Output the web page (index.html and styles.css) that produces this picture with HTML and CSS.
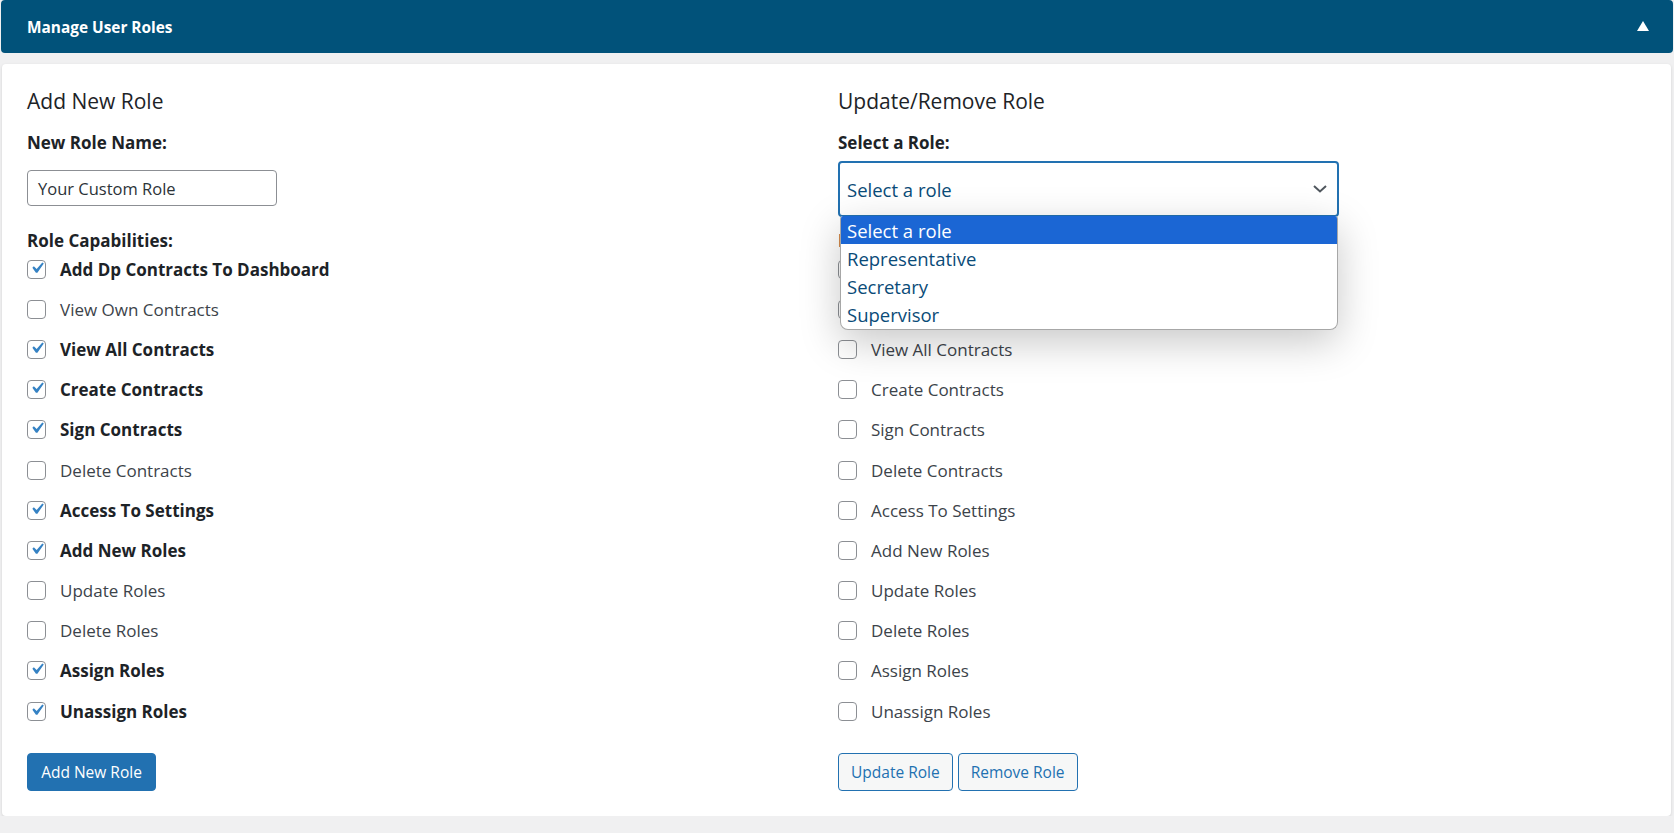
FILE: index.html
```html
<!DOCTYPE html>
<html lang="en">
<head>
<meta charset="utf-8">
<title>Manage User Roles</title>
<link rel="stylesheet" href="styles.css">
</head>
<body>
<div class="page">
  <header class="bar">
    <h1 class="bar-title">Manage User Roles</h1>
    <svg class="bar-toggle" width="12" height="10" viewBox="0 0 12 10" aria-hidden="true"><polygon points="6,0 12,10 0,10" fill="#fff"/></svg>
  </header>

  <main class="card">
    <section class="col">
      <h2 class="col-title">Add New Role</h2>
      <div class="field-label">New Role Name:</div>
      <div class="text-input">Your Custom Role</div>
      <div class="field-label caps-label">Role Capabilities:</div>
      <ul class="caps">
        <li class="cap on"><span class="box"><svg viewBox="0 0 20 20"><path d="M14.83 4.89l1.34.94-5.81 8.38H9.02L5.78 9.67l1.34-1.25 2.57 2.4z"/></svg></span>Add Dp Contracts To Dashboard</li>
        <li class="cap"><span class="box"></span>View Own Contracts</li>
        <li class="cap on"><span class="box"><svg viewBox="0 0 20 20"><path d="M14.83 4.89l1.34.94-5.81 8.38H9.02L5.78 9.67l1.34-1.25 2.57 2.4z"/></svg></span>View All Contracts</li>
        <li class="cap on"><span class="box"><svg viewBox="0 0 20 20"><path d="M14.83 4.89l1.34.94-5.81 8.38H9.02L5.78 9.67l1.34-1.25 2.57 2.4z"/></svg></span>Create Contracts</li>
        <li class="cap on"><span class="box"><svg viewBox="0 0 20 20"><path d="M14.83 4.89l1.34.94-5.81 8.38H9.02L5.78 9.67l1.34-1.25 2.57 2.4z"/></svg></span>Sign Contracts</li>
        <li class="cap"><span class="box"></span>Delete Contracts</li>
        <li class="cap on"><span class="box"><svg viewBox="0 0 20 20"><path d="M14.83 4.89l1.34.94-5.81 8.38H9.02L5.78 9.67l1.34-1.25 2.57 2.4z"/></svg></span>Access To Settings</li>
        <li class="cap on"><span class="box"><svg viewBox="0 0 20 20"><path d="M14.83 4.89l1.34.94-5.81 8.38H9.02L5.78 9.67l1.34-1.25 2.57 2.4z"/></svg></span>Add New Roles</li>
        <li class="cap"><span class="box"></span>Update Roles</li>
        <li class="cap"><span class="box"></span>Delete Roles</li>
        <li class="cap on"><span class="box"><svg viewBox="0 0 20 20"><path d="M14.83 4.89l1.34.94-5.81 8.38H9.02L5.78 9.67l1.34-1.25 2.57 2.4z"/></svg></span>Assign Roles</li>
        <li class="cap on"><span class="box"><svg viewBox="0 0 20 20"><path d="M14.83 4.89l1.34.94-5.81 8.38H9.02L5.78 9.67l1.34-1.25 2.57 2.4z"/></svg></span>Unassign Roles</li>
      </ul>
      <div class="actions">
        <button class="btn btn-primary">Add New Role</button>
      </div>
    </section>

    <section class="col">
      <h2 class="col-title">Update/Remove Role</h2>
      <div class="field-label">Select a Role:</div>
      <div class="select-wrap">
        <div class="select">
          <span>Select a role</span>
          <svg class="chev" width="14" height="8" viewBox="0 0 14 8" aria-hidden="true"><path d="M1 1l6 5.5L13 1" fill="none" stroke="#50575e" stroke-width="2"/></svg>
        </div>
        <ul class="select-list">
          <li class="opt active">Select a role</li>
          <li class="opt">Representative</li>
          <li class="opt">Secretary</li>
          <li class="opt">Supervisor</li>
        </ul>
      </div>
      <div class="field-label caps-label right">Role Capabilities:</div>
      <ul class="caps">
        <li class="cap"><span class="box"></span>Add Dp Contracts To Dashboard</li>
        <li class="cap"><span class="box"></span>View Own Contracts</li>
        <li class="cap"><span class="box"></span>View All Contracts</li>
        <li class="cap"><span class="box"></span>Create Contracts</li>
        <li class="cap"><span class="box"></span>Sign Contracts</li>
        <li class="cap"><span class="box"></span>Delete Contracts</li>
        <li class="cap"><span class="box"></span>Access To Settings</li>
        <li class="cap"><span class="box"></span>Add New Roles</li>
        <li class="cap"><span class="box"></span>Update Roles</li>
        <li class="cap"><span class="box"></span>Delete Roles</li>
        <li class="cap"><span class="box"></span>Assign Roles</li>
        <li class="cap"><span class="box"></span>Unassign Roles</li>
      </ul>
      <div class="actions">
        <button class="btn btn-secondary">Update Role</button>
        <button class="btn btn-secondary">Remove Role</button>
      </div>
    </section>
  </main>
</div>
</body>
</html>
```

FILE: styles.css
```css
* { box-sizing: border-box; }

html, body {
  margin: 0;
  padding: 0;
  background: #f0f0f1;
  font-family: "Open Sans", "Noto Sans", "Liberation Sans", sans-serif;
  color: #2c3338;
}

.page {
  display: flex;
  flex-direction: column;
  gap: 11px;
  padding: 0 1px 0 1px;
}

.bar {
  height: 53px;
  background: #01527a;
  border-radius: 4px;
  display: flex;
  align-items: center;
  justify-content: space-between;
  padding: 3px 24px 0 26px;
}

.bar-title {
  margin: 0;
  color: #fff;
  font-size: 15.4px;
  font-weight: 700;
  line-height: 20px;
}

.bar-toggle { display: block; margin-top: -5px; }

.card {
  margin: 0 2px 0 1px;
  background: #fff;
  border-radius: 4px;
  box-shadow: 0 1px 3px rgba(0, 0, 0, 0.13);
  display: grid;
  grid-template-columns: 811px 1fr;
  padding: 23px 22px 25px 25px;
}

.col { display: flex; flex-direction: column; align-items: flex-start; }

.col-title {
  margin: 0;
  font-size: 21px;
  font-weight: 400;
  line-height: 28px;
  color: #1d2327;
}

.field-label {
  margin-top: 16px;
  font-size: 17px;
  font-weight: 700;
  line-height: 24px;
  color: #1d2327;
}

.text-input {
  margin-top: 15px;
  width: 250px;
  height: 36px;
  border: 1px solid #8c8f94;
  border-radius: 4px;
  padding: 0 10px;
  display: flex;
  align-items: center;
  font-size: 16.5px;
  color: #2c3338;
}

.caps-label { margin-top: 23px; }
.caps-label.right { margin-top: 12px; }

.caps {
  list-style: none;
  margin: -4px 0 0;
  padding: 0;
}

.cap {
  height: 40.2px;
  display: flex;
  align-items: center;
  font-size: 17px;
  color: #3c434a;
  white-space: nowrap;
}

.cap.on { font-weight: 700; color: #1d2327; }

.box {
  width: 19px;
  height: 19px;
  border: 1px solid #8c8f94;
  border-radius: 4px;
  margin-right: 14px;
  display: flex;
  align-items: center;
  justify-content: center;
  background: #fff;
  flex: none;
}

.box svg {
  width: 24px;
  height: 24px;
  fill: #3582c4;
  margin: -3px -3px 0 -2px;
}

.actions {
  margin-top: 22px;
  display: flex;
  gap: 5px;
}

.btn {
  height: 38px;
  border-radius: 4px;
  font-family: inherit;
  font-size: 15.5px;
  padding: 0 12px;
  cursor: pointer;
  line-height: 1;
}

.btn-primary {
  width: 129px;
  background: #2271b1;
  border: 1px solid #2271b1;
  color: #fff;
}

.btn-secondary {
  background: #f6f7f7;
  border: 1px solid #2271b1;
  color: #2271b1;
}

.select-wrap {
  position: relative;
  margin-top: 6px;
  width: 501px;
}

.select {
  height: 56px;
  border: 2px solid #2271b1;
  border-radius: 4px;
  display: flex;
  align-items: center;
  justify-content: space-between;
  padding: 0 10px 0 7px;
  font-size: 18.5px;
  color: #0a4b78;
}

.chev { display: block; }

.select-list {
  position: absolute;
  top: 55px;
  left: 2px;
  right: 1px;
  margin: 0;
  padding: 0;
  list-style: none;
  background: #fff;
  border: 1px solid #a7a7a7;
  border-top: none;
  border-radius: 3px 3px 8px 8px;
  box-shadow: 0 12px 40px rgba(0, 0, 0, 0.22);
  overflow: hidden;
  z-index: 5;
}

.opt {
  height: 28.2px;
  display: flex;
  align-items: center;
  padding: 0 6px;
  font-size: 18.5px;
  color: #0a4b78;
}

.opt.active {
  background: #1b66d4;
  color: #fff;
}
```
